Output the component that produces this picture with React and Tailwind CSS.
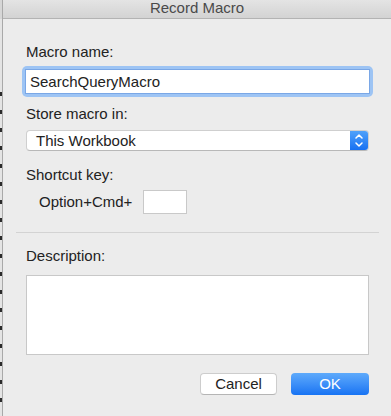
/**
 * App.jsx
 * "Record Macro" sheet dialog (macOS Excel style).
 */

import React from "react";

const FONT = { fontFamily: '"Liberation Sans", Arial, Helvetica, sans-serif' };

// marks of the spreadsheet peeking out on the left edge
const STRIP_MARKS = [92, 110, 128, 146, 164, 182, 200, 218, 236, 254, 272, 290, 308, 326, 344, 362, 380, 398];

export default function App() {
  return (
    <div className="flex w-[391px] h-[416px] overflow-hidden bg-[#ececec]" style={FONT}>
      {/* Left strip: sheet behind the dialog */}
      <div className="w-[2px] shrink-0 bg-[#e4e4e4] flex flex-col">
        <div className="h-[19px] bg-[#d6d6d6]" />
        {STRIP_MARKS.map((y, i) => (
          <div
            key={y}
            className="w-[2px] h-[4px] bg-[#2a2a2a] mt-[14px]"
            style={i === 0 ? { marginTop: y - 19 } : undefined}
          />
        ))}
      </div>
      <div className="w-px shrink-0 bg-[#a9a9a9]" />

      {/* Dialog */}
      <div className="flex-1 flex flex-col text-[15px] text-[#222222]">
        {/* Title bar */}
        <div className="h-[19px] shrink-0 flex justify-center bg-gradient-to-b from-[#e4e4e4] to-[#d3d3d3] border-b border-[#b3b3b3]">
          <span className="leading-[15px] text-[#4a4a4a]">Record Macro</span>
        </div>

        <div className="pl-[23px] pr-[22px] pt-[24px] flex flex-col">
          <Label>Macro name:</Label>
          <div className="mt-[5px] -mx-[4px] rounded-[5px] bg-[#9dc4f4] p-[3px]">
            <div className="h-[25px] bg-white border border-[#7aa7e6] flex items-center pl-[4px] leading-[18px]">
              SearchQueryMacro
            </div>
          </div>

          <Label className="mt-[8px]">Store macro in:</Label>
          <div className="mt-[7px] h-[21px] flex rounded-[4px] bg-white border border-[#cfcfcf] border-b-[#b8b8b8] overflow-hidden">
            <div className="flex-1 flex items-center pl-[9px] leading-[18px]">This Workbook</div>
            <div className="w-[18px] bg-gradient-to-b from-[#4fa1fa] to-[#1670f2] flex flex-col items-center justify-center gap-[3px]">
              <svg width="8" height="5" viewBox="0 0 8 5" fill="none">
                <path d="M1 4 L4 1 L7 4" stroke="white" strokeWidth="1.5" strokeLinecap="round" strokeLinejoin="round" />
              </svg>
              <svg width="8" height="5" viewBox="0 0 8 5" fill="none">
                <path d="M1 1 L4 4 L7 1" stroke="white" strokeWidth="1.5" strokeLinecap="round" strokeLinejoin="round" />
              </svg>
            </div>
          </div>

          <Label className="mt-[15px]">Shortcut key:</Label>
          <div className="mt-[6px] flex items-center gap-[11px] pl-[13px]">
            <span className="leading-[18px]">Option+Cmd+</span>
            <div className="w-[44px] h-[24px] bg-white border border-[#c9c9c9]" />
          </div>

          <div className="mt-[18px] -mx-[10px] h-px bg-[#d3d3d3]" />

          <Label className="mt-[14px]">Description:</Label>
          <div className="mt-[10px] h-[80px] bg-white border border-[#c8c8c8]" />

          <div className="mt-[18px] flex justify-end gap-[14px]">
            <button className="w-[77px] h-[22px] rounded-[4px] bg-white border border-[#cdcdcd] border-b-[#b5b5b5] leading-[18px] text-[#222222]">
              Cancel
            </button>
            <button className="w-[78px] h-[22px] rounded-[4px] bg-gradient-to-b from-[#5eaafb] to-[#1673f3] leading-[18px] text-white">
              OK
            </button>
          </div>
        </div>
      </div>
    </div>
  );
}

function Label({ children, className = "" }) {
  return <div className={`leading-[18px] ${className}`}>{children}</div>;
}
